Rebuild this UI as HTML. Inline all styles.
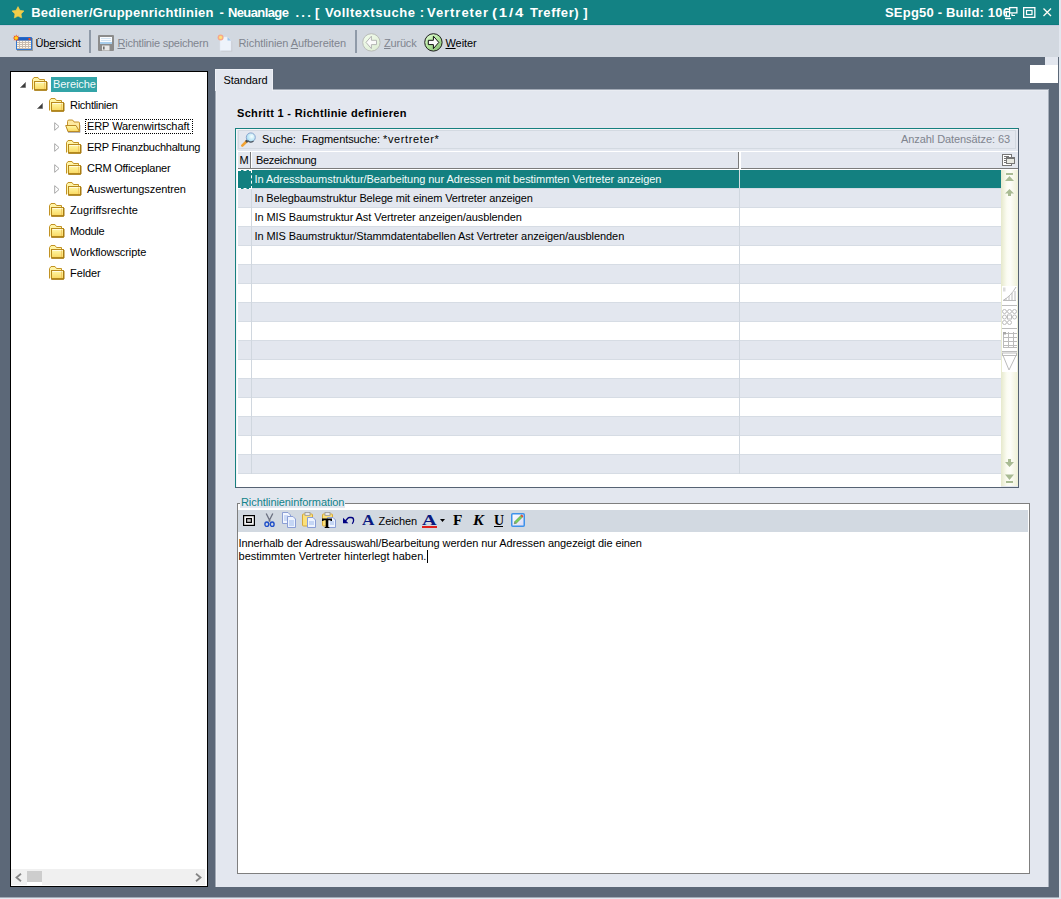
<!DOCTYPE html>
<html><head><meta charset="utf-8">
<style>
*{box-sizing:border-box;margin:0;padding:0}
html,body{width:1061px;height:899px;overflow:hidden}
body{position:relative;background:#e3e7ef;font-family:"Liberation Sans",sans-serif;font-size:11px;color:#000;letter-spacing:-0.08px}
.a{position:absolute}
.t{position:absolute;white-space:nowrap;line-height:13px}
svg{position:absolute;overflow:visible}
#title{left:0;top:0;width:1059px;height:25px;background:#138284}
#tb{left:0;top:25px;width:1059px;height:32px;background:#d2d8e0}
#dark{left:0;top:57px;width:1059px;height:840px;background:#5c6878}
#tree{left:10px;top:71px;width:198px;height:816px;background:#fff;border:1px solid #000}
.tree{position:absolute;left:11px;top:72px;width:196px;height:814px;overflow:hidden}
#panel{left:215px;top:89px;width:833px;height:798px;background:#e3e7ef;border-top:1px solid #a2aab6;border-left:1px solid #a2aab6;box-shadow:inset 1px 1px 0 #e9ecf2}
#tab{left:215px;top:69px;width:58px;height:22px;background:#e3e7ef;border-top:1px solid #eef0f5;border-left:1px solid #eef0f5;border-right:1px solid #eef0f5}
.tt{color:#fff;font-weight:bold;font-size:13px;letter-spacing:0.53px}
.dis{color:#80858f}
u{text-decoration:underline;text-decoration-thickness:1px;text-underline-offset:1px}
</style></head><body>
<!-- TITLE BAR -->
<div id="title" class="a"></div>
<svg style="left:12px;top:6px" width="12" height="13" viewBox="0 0 12 13"><polygon points="6.00,0.60 7.88,4.31 11.99,4.95 9.04,7.89 9.70,12.00 6.00,10.10 2.30,12.00 2.96,7.89 0.01,4.95 4.12,4.31" fill="#f3cd48" stroke="#f3cd48" stroke-width="0.6" stroke-linejoin="round"/></svg>
<div class="t tt" style="left:31.2px;top:6px;letter-spacing:0.26px">Bediener/Gruppenrichtlinien</div><div class="t tt" style="left:219.4px;top:6px;letter-spacing:0px">-</div><div class="t tt" style="left:227.9px;top:6px;letter-spacing:-0.59px">Neuanlage</div><div class="t tt" style="left:295.4px;top:6px;letter-spacing:2.3px">...</div><div class="t tt" style="left:315.0px;top:6px;letter-spacing:0px">[</div><div class="t tt" style="left:325.0px;top:6px;letter-spacing:0.53px">Volltextsuche</div><div class="t tt" style="left:419.7px;top:6px;letter-spacing:0px">:</div><div class="t tt" style="left:427.0px;top:6px;letter-spacing:0.95px">Vertreter</div><div class="t tt" style="left:491.5px;top:6px;letter-spacing:1.6px;transform:scaleX(1.15);transform-origin:0 0">(1/4</div><div class="t tt" style="left:530.0px;top:6px;letter-spacing:0.54px">Treffer)</div><div class="t tt" style="left:583.2px;top:6px;letter-spacing:0px">]</div>
<div class="t tt" style="left:885px;top:6px;letter-spacing:0.2px">SEpg50 - Build: 106</div>
<svg style="left:1003px;top:6px" width="16" height="14" viewBox="0 0 16 14">
<rect x="6.6" y="1.6" width="7.3" height="5.3" fill="none" stroke="#fff" stroke-width="1.3"/>
<path d="M9 7.5 V9.5 H12" fill="none" stroke="#fff" stroke-width="1.2"/>
<path d="M3 5 H7 V11 H3 Z" fill="#fff"/><rect x="4" y="6.5" width="2" height="3" fill="#138284"/>
<path d="M2 12.5 H8" stroke="#fff" stroke-width="1.4"/>
</svg>
<svg style="left:1023px;top:7px" width="13" height="11" viewBox="0 0 13 11"><rect x="0.65" y="0.65" width="11.2" height="9.7" fill="none" stroke="#fff" stroke-width="1.3"/><rect x="3.5" y="3.5" width="5.5" height="4" fill="none" stroke="#fff" stroke-width="1.2"/></svg>
<svg style="left:1043px;top:8px" width="9" height="9" viewBox="0 0 9 9"><path d="M0.5 0.5 L8 8 M8 0.5 L0.5 8" stroke="#fffdf5" stroke-width="1.3"/></svg>

<!-- TOOLBAR -->
<div id="tb" class="a"></div>
<div class="a" style="left:0;top:24px;width:1059px;height:1px;background:#0e7b7d"></div><div class="a" style="left:0;top:25px;width:1059px;height:1px;background:#c4cbe0"></div>
<!-- calendar -->
<svg style="left:12px;top:34px" width="22" height="18" viewBox="0 0 22 18">
<rect x="5" y="4" width="16" height="13" fill="#6f7068" opacity="0.55"/>
<rect x="4" y="3" width="16" height="13" rx="1" fill="#2f78d4"/>
<rect x="4.5" y="3.5" width="15" height="3" fill="#1f5fc0"/>
<rect x="5" y="6.5" width="14" height="8.5" fill="#c9bcb0"/>
<g fill="#fff9ec"><rect x="5" y="7" width="2" height="1"/><rect x="5" y="9" width="2" height="1"/><rect x="5" y="11" width="2" height="1"/><rect x="5" y="13" width="2" height="1"/><rect x="8" y="7" width="2" height="1"/><rect x="8" y="9" width="2" height="1"/><rect x="8" y="11" width="2" height="1"/><rect x="8" y="13" width="2" height="1"/><rect x="11" y="7" width="2" height="1"/><rect x="11" y="9" width="2" height="1"/><rect x="11" y="11" width="2" height="1"/><rect x="11" y="13" width="2" height="1"/><rect x="14" y="7" width="2" height="1"/><rect x="14" y="9" width="2" height="1"/><rect x="14" y="11" width="2" height="1"/><rect x="14" y="13" width="2" height="1"/><rect x="17" y="7" width="2" height="1"/><rect x="17" y="9" width="2" height="1"/><rect x="17" y="11" width="2" height="1"/><rect x="17" y="13" width="2" height="1"/></g>
<rect x="16.5" y="4" width="2" height="2" fill="#ef4a1a"/>
<polygon points="4.20,0.40 4.97,2.15 6.75,1.45 6.05,3.23 7.80,4.00 6.05,4.77 6.75,6.55 4.97,5.85 4.20,7.60 3.43,5.85 1.65,6.55 2.35,4.77 0.60,4.00 2.35,3.23 1.65,1.45 3.43,2.15" fill="#f04a1a"/><circle cx="4.2" cy="4" r="1.8" fill="#ffd81e"/>
</svg>
<div class="t" style="left:35.5px;top:37px;letter-spacing:-0.15px">Üb<u>e</u>rsicht</div>
<div class="a" style="left:89px;top:30px;width:2px;height:23px;background:#8f9aa8"></div>
<!-- floppy -->
<svg style="left:98px;top:35px" width="16" height="16" viewBox="0 0 16 16">
<rect x="0" y="0" width="16" height="16" rx="1" fill="#8c8c8c"/>
<rect x="2" y="2" width="12" height="7" fill="#fafcff"/>
<rect x="2" y="7" width="12" height="2" fill="#a7cdec"/>
<path d="M3 3.5h10M3 5.5h10" stroke="#c8dcef" stroke-width="0.8"/>
<rect x="4" y="10.5" width="7.5" height="5" fill="#e8e8e8"/>
<rect x="5" y="11.5" width="1.6" height="3" fill="#707070"/>
</svg>
<div class="t dis" style="left:117.5px;top:37px;letter-spacing:-0.23px"><u>R</u>ichtlinie speichern</div>
<!-- new doc -->
<svg style="left:218px;top:34px" width="18" height="18" viewBox="0 0 18 18">
<path d="M2.5 3.5 H10 L13.5 7 V17 H2.5 Z" fill="#c9ccd2" transform="translate(0.8,0.8)"/>
<path d="M2 3 H9.5 L13 6.5 V16.5 H2 Z" fill="#eef3fb" stroke="#dfe6f1" stroke-width="0.5"/>
<path d="M9.5 3 L13 6.5 H9.5 Z" fill="#9cc5ec"/>
<circle cx="2.6" cy="3.4" r="3" fill="#f5a88a"/><circle cx="2.6" cy="3.4" r="1.6" fill="#ffe07a"/>
</svg>
<div class="t dis" style="left:238.5px;top:37px">Richtlinien <u>A</u>ufbereiten</div>
<div class="a" style="left:355px;top:30px;width:2px;height:23px;background:#8f9aa8"></div>
<!-- zurück -->
<svg style="left:362px;top:33px" width="19" height="19" viewBox="0 0 19 19">
<defs><linearGradient id="gz" x1="0.2" y1="0.1" x2="0.8" y2="0.9"><stop offset="0" stop-color="#f0fbea"/><stop offset="1" stop-color="#dfeed6"/></linearGradient></defs>
<circle cx="9.4" cy="9.4" r="8.7" fill="url(#gz)" stroke="#b9bcb8" stroke-width="1"/>
<path d="M14.5 7.3 H9.4 V3.2 L4 9.4 L9.4 15.6 V11.6 H14.5 Z" fill="#fafafa" stroke="#b4b6b4" stroke-width="1" stroke-linejoin="miter"/>
</svg>
<div class="t dis" style="left:384px;top:37px;letter-spacing:-0.2px"><u>Z</u>urück</div>
<!-- weiter -->
<svg style="left:424px;top:33px" width="19" height="19" viewBox="0 0 19 19">
<defs><linearGradient id="gw" x1="0.2" y1="0.1" x2="0.8" y2="0.9"><stop offset="0" stop-color="#d8f7c8"/><stop offset="0.5" stop-color="#b2e59c"/><stop offset="1" stop-color="#8dc27a"/></linearGradient></defs>
<circle cx="9.4" cy="9.4" r="8.7" fill="url(#gw)" stroke="#1e1e1e" stroke-width="1"/>
<path d="M4.3 7.3 H9.4 V3.2 L14.8 9.4 L9.4 15.6 V11.6 H4.3 Z" fill="#fbfbfb" stroke="#111" stroke-width="1" stroke-linejoin="miter"/>
</svg>
<div class="t" style="left:445.5px;top:37px"><u>W</u>eiter</div>

<!-- DARK BG -->
<div id="dark" class="a"></div>
<div class="a" style="left:1045px;top:57px;width:13px;height:8px;background:#e3e7ef"></div>
<div class="a" style="left:1030px;top:65px;width:28px;height:18px;background:#fff"></div>

<!-- TREE -->
<div id="tree" class="a"></div>
<svg width="0" height="0" style="left:0;top:0"><defs>
<linearGradient id="fg" x1="0" y1="0" x2="0" y2="1"><stop offset="0" stop-color="#fff9a8"/><stop offset="1" stop-color="#f9d75e"/></linearGradient>
<symbol id="fold" viewBox="0 0 17 14"><path d="M1.5 12.5 V2.5 L3 0.5 H7 L8.5 2.5 H13.5 V5" fill="#fff4a6" stroke="#c29223" stroke-width="1"/><rect x="3.5" y="4.5" width="12" height="8.5" fill="url(#fg)" stroke="#b98a1d" stroke-width="1"/><path d="M4.5 5.5 H14.5" stroke="#fffbe0" stroke-width="1"/><path d="M3.5 13 H15.8 M15.8 5 V13" stroke="#a77b12" stroke-width="1.4"/><path d="M13.5 5.5 V12" stroke="#f0c060" stroke-width="0.8"/></symbol>
<symbol id="fopen" viewBox="0 0 16 14"><path d="M3 13.5 H15 V6" fill="none" stroke="#5a5a6a" stroke-width="1" opacity="0.45"/><path d="M2.5 8 V2.5 Q2.5 1 4 1 H7 Q8 1 8.5 2 L9 3 H13.5 Q14.5 3 14.5 4 V12.5 H3 Z" fill="#fde9a0" stroke="#c4922c" stroke-width="1"/><path d="M0.7 6.5 H11 L14.5 12.5 H3 Z" fill="url(#fg)" stroke="#bb8a24" stroke-width="1"/></symbol>
</defs></svg>
<svg style="left:20px;top:82px" width="6" height="6" viewBox="0 0 6 6"><path d="M0.5 5.5 L5.5 0.5 V5.5 Z" fill="#3c3c3c" stroke="#6a6a6a" stroke-width="0.7"/></svg>
<svg style="left:31px;top:77px" width="17" height="14"><use href="#fold"/></svg>
<div class="a" style="left:51px;top:77px;width:46px;height:15px;background:#33a4a8"></div>
<div class="t" style="left:53px;top:78px;color:#f2fafa">Bereiche</div>
<svg style="left:37px;top:103px" width="6" height="6" viewBox="0 0 6 6"><path d="M0.5 5.5 L5.5 0.5 V5.5 Z" fill="#3c3c3c" stroke="#6a6a6a" stroke-width="0.7"/></svg>
<svg style="left:48px;top:98px" width="17" height="14"><use href="#fold"/></svg>
<div class="t" style="left:70px;top:99px;letter-spacing:-0.28px">Richtlinien</div>
<svg style="left:54px;top:122px" width="6" height="9" viewBox="0 0 6 9"><path d="M0.7 0.7 L5 4.5 L0.7 8.3 Z" fill="none" stroke="#a8a8a8" stroke-width="1"/></svg>
<svg style="left:65px;top:119px" width="16" height="14"><use href="#fopen"/></svg>
<div class="t" style="left:87px;top:120px">ERP Warenwirtschaft</div>
<div class="a" style="left:85px;top:119px;width:108px;height:15px;border:1px dotted #000"></div>
<svg style="left:54px;top:143px" width="6" height="9" viewBox="0 0 6 9"><path d="M0.7 0.7 L5 4.5 L0.7 8.3 Z" fill="none" stroke="#a8a8a8" stroke-width="1"/></svg>
<svg style="left:65px;top:140px" width="17" height="14"><use href="#fold"/></svg>
<div class="t" style="left:87px;top:141px;letter-spacing:-0.25px">ERP Finanzbuchhaltung</div>
<svg style="left:54px;top:164px" width="6" height="9" viewBox="0 0 6 9"><path d="M0.7 0.7 L5 4.5 L0.7 8.3 Z" fill="none" stroke="#a8a8a8" stroke-width="1"/></svg>
<svg style="left:65px;top:161px" width="17" height="14"><use href="#fold"/></svg>
<div class="t" style="left:87px;top:162px;letter-spacing:-0.24px">CRM Officeplaner</div>
<svg style="left:54px;top:185px" width="6" height="9" viewBox="0 0 6 9"><path d="M0.7 0.7 L5 4.5 L0.7 8.3 Z" fill="none" stroke="#a8a8a8" stroke-width="1"/></svg>
<svg style="left:65px;top:182px" width="17" height="14"><use href="#fold"/></svg>
<div class="t" style="left:87px;top:183px">Auswertungszentren</div>
<svg style="left:48px;top:203px" width="17" height="14"><use href="#fold"/></svg>
<div class="t" style="left:70px;top:204px;letter-spacing:0.07px">Zugriffsrechte</div>
<svg style="left:48px;top:224px" width="17" height="14"><use href="#fold"/></svg>
<div class="t" style="left:70px;top:225px;letter-spacing:-0.3px">Module</div>
<svg style="left:48px;top:245px" width="17" height="14"><use href="#fold"/></svg>
<div class="t" style="left:70px;top:246px">Workflowscripte</div>
<svg style="left:48px;top:266px" width="17" height="14"><use href="#fold"/></svg>
<div class="t" style="left:70px;top:267px">Felder</div>
<div class="a" style="left:11px;top:869px;width:194px;height:16px;background:#f0f0f0"></div>
<div class="a" style="left:27px;top:871px;width:15px;height:11px;background:#cdcdcd"></div>
<div class="a" style="left:27px;top:882px;width:15px;height:3px;background:#fff"></div>
<svg style="left:15px;top:873px" width="7" height="9" viewBox="0 0 7 9"><path d="M6 0.8 L1.5 4.5 L6 8.2" fill="none" stroke="#858585" stroke-width="1.8"/></svg>
<svg style="left:195px;top:873px" width="7" height="9" viewBox="0 0 7 9"><path d="M1 0.8 L5.5 4.5 L1 8.2" fill="none" stroke="#858585" stroke-width="1.8"/></svg>

<!-- PANEL -->
<div id="panel" class="a"></div><div class="a" style="left:1048px;top:89px;width:1px;height:798px;background:#a8b0bc"></div><div class="a" style="left:0;top:897px;width:1059px;height:1px;background:#a2aab6"></div>
<div id="tab" class="a"></div>
<div class="t" style="left:223.5px;top:74px">Standard</div>
<div class="t" style="left:237px;top:107px;font-weight:bold;letter-spacing:0.33px">Schritt 1 - Richtlinie definieren</div>
<div class="a" style="left:235px;top:128px;width:784px;height:360px;background:#e3e7ef;border:1px solid #566273;border-top-color:#16807f;border-left-color:#16807f"></div>
<div class="a" style="left:236px;top:129px;width:782px;height:358px;border-top:1px solid #f7f5f8;border-left:1px solid #f7f5f8"></div><div class="a" style="left:237px;top:150px;width:1px;height:337px;background:#fff"></div>
<div class="a" style="left:238px;top:130px;width:778px;height:19px;border:1px solid #d3d9e1"></div>
<svg style="left:241px;top:132px" width="16" height="15" viewBox="0 0 16 15"><defs><radialGradient id="lens" cx="0.6" cy="0.4" r="0.6"><stop offset="0" stop-color="#f6ffff"/><stop offset="1" stop-color="#a6dcf2"/></radialGradient></defs><path d="M1.3 13.7 L5.5 9.5" stroke="#f2a232" stroke-width="2.6" stroke-linecap="round"/><path d="M5 10 L7.3 7.7" stroke="#4a4a4a" stroke-width="2.6"/><circle cx="9.8" cy="5.4" r="4.5" fill="url(#lens)" stroke="#8aa6cf" stroke-width="1"/><path d="M6.5 8.5 A4.5 4.5 0 0 0 12.5 9" fill="none" stroke="#505860" stroke-width="1.1"/></svg>
<div class="t" style="left:262px;top:133px">Suche:&nbsp; Fragmentsuche: <span style="letter-spacing:0.62px">*vertreter*</span></div>
<div class="t" style="left:901px;top:133px;color:#7f848e">Anzahl Datensätze: 63</div>
<div class="a" style="left:238px;top:151px;width:780px;height:1px;background:#fff"></div>
<div class="a" style="left:238px;top:152px;width:780px;height:17px;background:#e3e7ef;border-bottom:1px solid #7b7b7b"></div>
<div class="a" style="left:250px;top:152px;width:1px;height:17px;background:#7b7b7b"></div>
<div class="a" style="left:251px;top:152px;width:1px;height:16px;background:#fff"></div>
<div class="a" style="left:738px;top:152px;width:1px;height:17px;background:#7b7b7b"></div>
<div class="a" style="left:739px;top:152px;width:2px;height:17px;background:#fff"></div>
<div class="t" style="left:239.5px;top:154px">M</div>
<div class="t" style="left:256px;top:154px;letter-spacing:-0.3px">Bezeichnung</div>
<svg style="left:1002px;top:154px" width="13" height="12" viewBox="0 0 13 12"><rect x="0.5" y="0.5" width="9" height="11" fill="#fff" stroke="#777" stroke-width="1"/><path d="M2 2.5h5M2 4.5h3M2 6.5h3M2 8.5h3" stroke="#777" stroke-width="1"/><rect x="4.5" y="3.5" width="8" height="6" fill="#e8e9e2" stroke="#777" stroke-width="1"/><path d="M4.5 4.5h8" stroke="#777" stroke-width="1"/></svg>
<div class="a" style="left:238px;top:169px;width:780px;height:1px;background:#fff"></div>
<div class="a" style="left:238px;top:170px;width:763px;height:19px;background:#138080;border-bottom:1px solid #d6dce4"></div>
<div class="t" style="left:254.5px;top:173px;color:#f4fbfb;letter-spacing:-0.05px">In Adressbaumstruktur/Bearbeitung nur Adressen mit bestimmten Vertreter anzeigen</div>
<div class="a" style="left:238px;top:189px;width:763px;height:19px;background:#e3e7ef;border-bottom:1px solid #d6dce4"></div>
<div class="t" style="left:254.5px;top:192px;color:#000;letter-spacing:-0.13px">In Belegbaumstruktur Belege mit einem Vertreter anzeigen</div>
<div class="a" style="left:238px;top:208px;width:763px;height:19px;background:#fff;border-bottom:1px solid #d6dce4"></div>
<div class="t" style="left:254.5px;top:211px;color:#000">In MIS Baumstruktur Ast Vertreter anzeigen/ausblenden</div>
<div class="a" style="left:238px;top:227px;width:763px;height:19px;background:#e3e7ef;border-bottom:1px solid #d6dce4"></div>
<div class="t" style="left:254.5px;top:230px;color:#000">In MIS Baumstruktur/Stammdatentabellen Ast Vertreter anzeigen/ausblenden</div>
<div class="a" style="left:238px;top:246px;width:763px;height:19px;background:#fff;border-bottom:1px solid #d6dce4"></div>
<div class="a" style="left:238px;top:265px;width:763px;height:19px;background:#e3e7ef;border-bottom:1px solid #d6dce4"></div>
<div class="a" style="left:238px;top:284px;width:763px;height:19px;background:#fff;border-bottom:1px solid #d6dce4"></div>
<div class="a" style="left:238px;top:303px;width:763px;height:19px;background:#e3e7ef;border-bottom:1px solid #d6dce4"></div>
<div class="a" style="left:238px;top:322px;width:763px;height:19px;background:#fff;border-bottom:1px solid #d6dce4"></div>
<div class="a" style="left:238px;top:341px;width:763px;height:19px;background:#e3e7ef;border-bottom:1px solid #d6dce4"></div>
<div class="a" style="left:238px;top:360px;width:763px;height:19px;background:#fff;border-bottom:1px solid #d6dce4"></div>
<div class="a" style="left:238px;top:379px;width:763px;height:19px;background:#e3e7ef;border-bottom:1px solid #d6dce4"></div>
<div class="a" style="left:238px;top:398px;width:763px;height:19px;background:#fff;border-bottom:1px solid #d6dce4"></div>
<div class="a" style="left:238px;top:417px;width:763px;height:19px;background:#e3e7ef;border-bottom:1px solid #d6dce4"></div>
<div class="a" style="left:238px;top:436px;width:763px;height:19px;background:#fff;border-bottom:1px solid #d6dce4"></div>
<div class="a" style="left:238px;top:455px;width:763px;height:19px;background:#e3e7ef;border-bottom:1px solid #d6dce4"></div>
<div class="a" style="left:251px;top:170px;width:1px;height:304px;background:#d0d7df"></div>
<div class="a" style="left:739px;top:170px;width:1px;height:304px;background:#d0d7df"></div>
<div class="a" style="left:739px;top:170px;width:1px;height:18px;background:#d3dcdf"></div>
<div class="a" style="left:238px;top:170px;width:14px;height:19px;border:1px dashed #fff;border-left:none;background:#138080"></div>
<div class="a" style="left:238px;top:474px;width:763px;height:13px;background:#fff"></div>
<div class="a" style="left:1001px;top:170px;width:17px;height:316px;background:linear-gradient(90deg,#e6e9cc 0%,#fbfcf2 35%,#fdfdf8 55%,#eef0d6 100%)"></div>
<svg style="left:1005px;top:172px" width="10" height="24" viewBox="0 0 10 24" fill="#a9bb93"><rect x="1" y="1" width="7" height="2"/><path d="M0 9 L4.5 4 L9 9 Z"/><path d="M0 21.6 L4.5 17 L9 21.6 H6 V24 H3 V21.6 Z"/></svg>
<svg style="left:1005px;top:459px" width="10" height="25" viewBox="0 0 10 25" fill="#a9bb93"><path d="M3 0 H6 V3 H9 L4.5 8 L0 3 H3 Z"/><path d="M0 15.5 H9 L4.5 21 Z"/><rect x="1" y="22" width="7" height="2"/></svg>
<svg style="left:1002px;top:286px" width="15" height="86" viewBox="0 0 15 86" stroke="#bcbcbc" fill="none" stroke-width="1">
<rect x="0" y="0" width="15" height="86" fill="#fff" stroke="none"/>
<path d="M1 14.5 Q9 10 14 1"/><path d="M1 14.5h13M4 12v3M7 10v5M10 7v8M13 5v10"/>
<rect x="1" y="1.5" width="2.5" height="4" fill="#dcdcdc" stroke="none"/>
<path d="M0 19.5h15M0 42.5h15M0 65.5h15"/>
<circle cx="2.5" cy="25.5" r="2"/><circle cx="7.5" cy="25.5" r="2"/><circle cx="12.5" cy="25.5" r="2"/>
<circle cx="2.5" cy="31" r="2"/><rect x="5.5" y="29" width="4" height="4"/><circle cx="12.5" cy="31" r="2"/>
<circle cx="2.5" cy="36.5" r="2"/><circle cx="7.5" cy="36.5" r="2"/>
<path d="M1.5 46v15.5M6.5 46v15.5M11.5 46v15.5M1 47.5h14M1 51.5h14M1 55.5h14M1 59.5h14M1 61.5h14"/>
<rect x="1" y="46" width="3" height="2.5" fill="#a8a8a8" stroke="none"/>
<rect x="0.5" y="67" width="14" height="2.5"/><path d="M1 69.5 L7 84 L14 69.5"/>
</svg>
<div class="a" style="left:237px;top:503px;width:793px;height:371px;border:1px solid #7f7f7f;background:#fff"></div>
<div class="a" style="left:240px;top:497px;width:105px;height:11px;background:#e3e7ef"></div>
<div class="t" style="left:241px;top:496px;color:#11838a">Richtlinieninformation</div>
<div class="a" style="left:238px;top:510px;width:790px;height:22px;background:#d2d9e1"></div>
<svg style="left:243px;top:515px" width="12" height="11" viewBox="0 0 12 11"><rect x="0.6" y="0.6" width="10.8" height="9.8" fill="#f4f4f4" stroke="#000" stroke-width="1.2"/><rect x="3.6" y="3.6" width="4.8" height="3.8" fill="#c8c8c8" stroke="#000" stroke-width="1.2"/></svg>
<svg style="left:264px;top:513px" width="11" height="14" viewBox="0 0 11 14"><path d="M2.2 0.5 L6.2 8.5 M8.8 0.5 L4.8 8.5" stroke="#6a7080" stroke-width="1.3"/><ellipse cx="2.8" cy="11.2" rx="1.9" ry="2.2" fill="none" stroke="#1f4fc8" stroke-width="1.4"/><ellipse cx="8.2" cy="11.2" rx="1.9" ry="2.2" fill="none" stroke="#1f4fc8" stroke-width="1.4"/></svg>
<svg style="left:282px;top:512px" width="15" height="16" viewBox="0 0 15 16"><path d="M0.5 0.5 H6 L8.5 3 V11.5 H0.5 Z" fill="#f2f6ff" stroke="#8c9fd4" stroke-width="1"/><path d="M2 4h4M2 6h4M2 8h4" stroke="#a8c0ec" stroke-width="1"/><path d="M5.5 4.5 H11 L13.5 7 V15.5 H5.5 Z" fill="#eef4ff" stroke="#8a9ed6" stroke-width="1"/><path d="M7 9h5M7 11h5M7 13h5" stroke="#9cb8ea" stroke-width="1"/></svg>
<svg style="left:302px;top:512px" width="15" height="16" viewBox="0 0 15 16"><rect x="0.5" y="2" width="10" height="12" rx="1" fill="#fbe07a" stroke="#d6a93a" stroke-width="1"/><rect x="3" y="0.5" width="5" height="3" fill="#e8e8e8" stroke="#999" stroke-width="0.8"/><path d="M5.5 5.5 H11 L13.5 8 V15.5 H5.5 Z" fill="#eef4ff" stroke="#8a9ed6" stroke-width="1"/><path d="M7 10h5M7 12h5" stroke="#9cb8ea" stroke-width="1"/></svg>
<svg style="left:322px;top:512px" width="15" height="16" viewBox="0 0 15 16"><rect x="0.5" y="2" width="10" height="12" rx="1" fill="#fbe07a" stroke="#d6a93a" stroke-width="1"/><rect x="3" y="0.5" width="5" height="3" fill="#e8e8e8" stroke="#999" stroke-width="0.8"/><path d="M5.5 5.5 H11 L13.5 8 V15.5 H5.5 Z" fill="#eef4ff" stroke="#8a9ed6" stroke-width="1"/><path d="M8 10h4M8 12h4" stroke="#9cb8ea" stroke-width="1"/><path d="M0 6.5 H10 V9 H8.5 V8.3 H6.3 V15 H7.3 V16 H2.7 V15 H3.7 V8.3 H1.5 V9 H0 Z" fill="#000"/></svg>
<svg style="left:342px;top:516px" width="13" height="9" viewBox="0 0 13 9"><path d="M1 1.8 V7.2 H6.4 Z" fill="#000080"/><path d="M3.2 5.2 L5.8 2.2 Q6.5 1.5 7.5 1.5 H9.2 Q11.6 1.5 11.6 4.2 Q11.6 6.4 10.2 7.8" fill="none" stroke="#000080" stroke-width="1.3"/></svg>
<div class="t" style="left:362px;top:514px;font-family:'Liberation Serif',serif;font-weight:bold;font-size:15px;color:#0a1a80;transform:scaleX(1.15);transform-origin:0 0">A</div>
<div class="t" style="left:378.5px;top:515px">Zeichen</div>
<div class="t" style="left:422px;top:514px;font-family:'Liberation Serif',serif;font-weight:bold;font-size:15px;color:#0a1a80;transform:scaleX(1.35);transform-origin:0 0">A</div>
<div class="a" style="left:422px;top:526px;width:15px;height:2px;background:#e0201c"></div>
<svg style="left:440px;top:519px" width="5" height="3" viewBox="0 0 5 3"><path d="M0 0 H5 L2.5 3 Z" fill="#000"/></svg>
<div class="t" style="left:453px;top:514px;font-family:'Liberation Serif',serif;font-weight:bold;font-size:14px;transform:scaleX(1.1);transform-origin:0 0">F</div>
<div class="t" style="left:473px;top:514px;font-family:'Liberation Serif',serif;font-weight:bold;font-style:italic;font-size:14px;transform:scaleX(1.15);transform-origin:0 0">K</div>
<div class="t" style="left:494px;top:514px;font-family:'Liberation Serif',serif;font-weight:bold;font-size:14px">U</div>
<div class="a" style="left:494px;top:526px;width:9px;height:1px;background:#000"></div>
<svg style="left:511px;top:513px" width="14" height="14" viewBox="0 0 14 14"><defs><linearGradient id="eg" x1="0" y1="0" x2="1" y2="1"><stop offset="0" stop-color="#ffffff"/><stop offset="1" stop-color="#d8d8f4"/></linearGradient></defs><rect x="0.75" y="0.75" width="12.5" height="12.5" rx="1" fill="url(#eg)" stroke="#3d92ea" stroke-width="1.5"/><path d="M3.2 10.8 L3.8 8.6 L10.4 2 L12 3.6 L5.4 10.2 Z" fill="#7cd05a" stroke="#3f8a30" stroke-width="0.5"/><path d="M10.2 2.2 L11.8 3.8" stroke="#e04a3a" stroke-width="1.8"/><path d="M3.2 10.8 L3.8 8.6 L5.4 10.2 Z" fill="#888"/></svg>
<div class="t" style="left:238.5px;top:537px">Innerhalb der Adressauswahl/Bearbeitung werden nur Adressen angezeigt die einen</div>
<div class="t" style="left:238.5px;top:550px;letter-spacing:0.02px">bestimmten Vertreter hinterlegt haben.</div>
<div class="a" style="left:427px;top:550px;width:1px;height:13px;background:#000"></div>
</body></html>
